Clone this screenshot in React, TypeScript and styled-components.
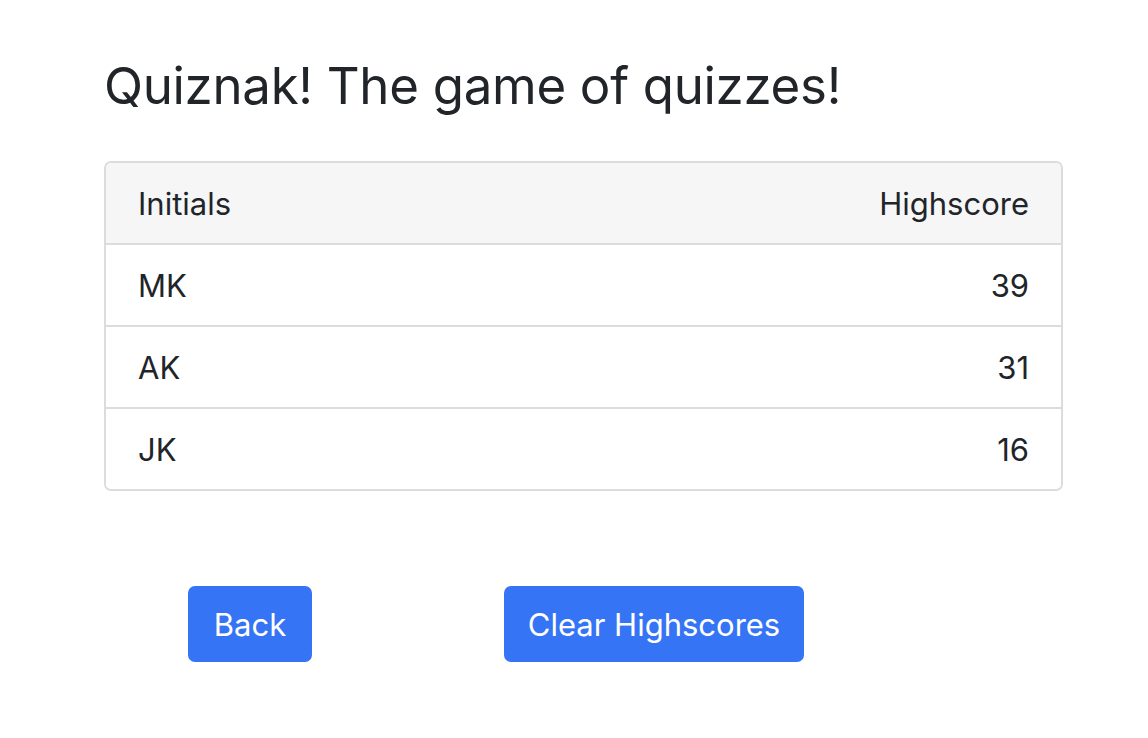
import React from "react";
import styled, { createGlobalStyle } from "styled-components";

const Global = createGlobalStyle`
  html, body { margin: 0; padding: 0; background: #fff; }
  body {
    font-family: Inter, "Noto Sans", "Liberation Sans", sans-serif;
    color: #212529;
  }
`;

const Page = styled.div`
  width: 1148px;
  height: 738px;
  box-sizing: border-box;
  padding: 50px 85px 0 104px;
`;

const Title = styled.h1`
  margin: 0 0 39px 0;
  font-size: 51px;
  font-weight: 400;
  line-height: 72px;
  letter-spacing: -0.3px;
`;

const Card = styled.div`
  border: 2px solid #dcdcdc;
  border-radius: 7px;
  overflow: hidden;
`;

const Row = styled.div<{ $head?: boolean }>`
  display: flex;
  justify-content: space-between;
  align-items: center;
  height: 80px;
  padding: 0 32px;
  font-size: 31px;
  background: ${(p) => (p.$head ? "#f6f6f6" : "#fff")};
  & + & {
    border-top: 2px solid #dcdcdc;
  }
`;

const Actions = styled.div`
  display: flex;
  gap: 192px;
  margin-top: 95px;
  padding-left: 84px;
`;

const Button = styled.button<{ $w: number }>`
  width: ${(p) => p.$w}px;
  height: 76px;
  border: none;
  border-radius: 7px;
  background: #3574f4;
  color: #fff;
  font-family: inherit;
  font-size: 31px;
  padding: 0;
  cursor: pointer;
`;

const scores = [
  { initials: "MK", score: 39 },
  { initials: "AK", score: 31 },
  { initials: "JK", score: 16 },
];

export default function App() {
  return (
    <>
      <Global />
      <Page>
        <Title>Quiznak! The game of quizzes!</Title>
        <Card>
          <Row $head>
            <span>Initials</span>
            <span>Highscore</span>
          </Row>
          {scores.map((s) => (
            <Row key={s.initials}>
              <span>{s.initials}</span>
              <span>{s.score}</span>
            </Row>
          ))}
        </Card>
        <Actions>
          <Button $w={124}>Back</Button>
          <Button $w={300}>Clear Highscores</Button>
        </Actions>
      </Page>
    </>
  );
}
